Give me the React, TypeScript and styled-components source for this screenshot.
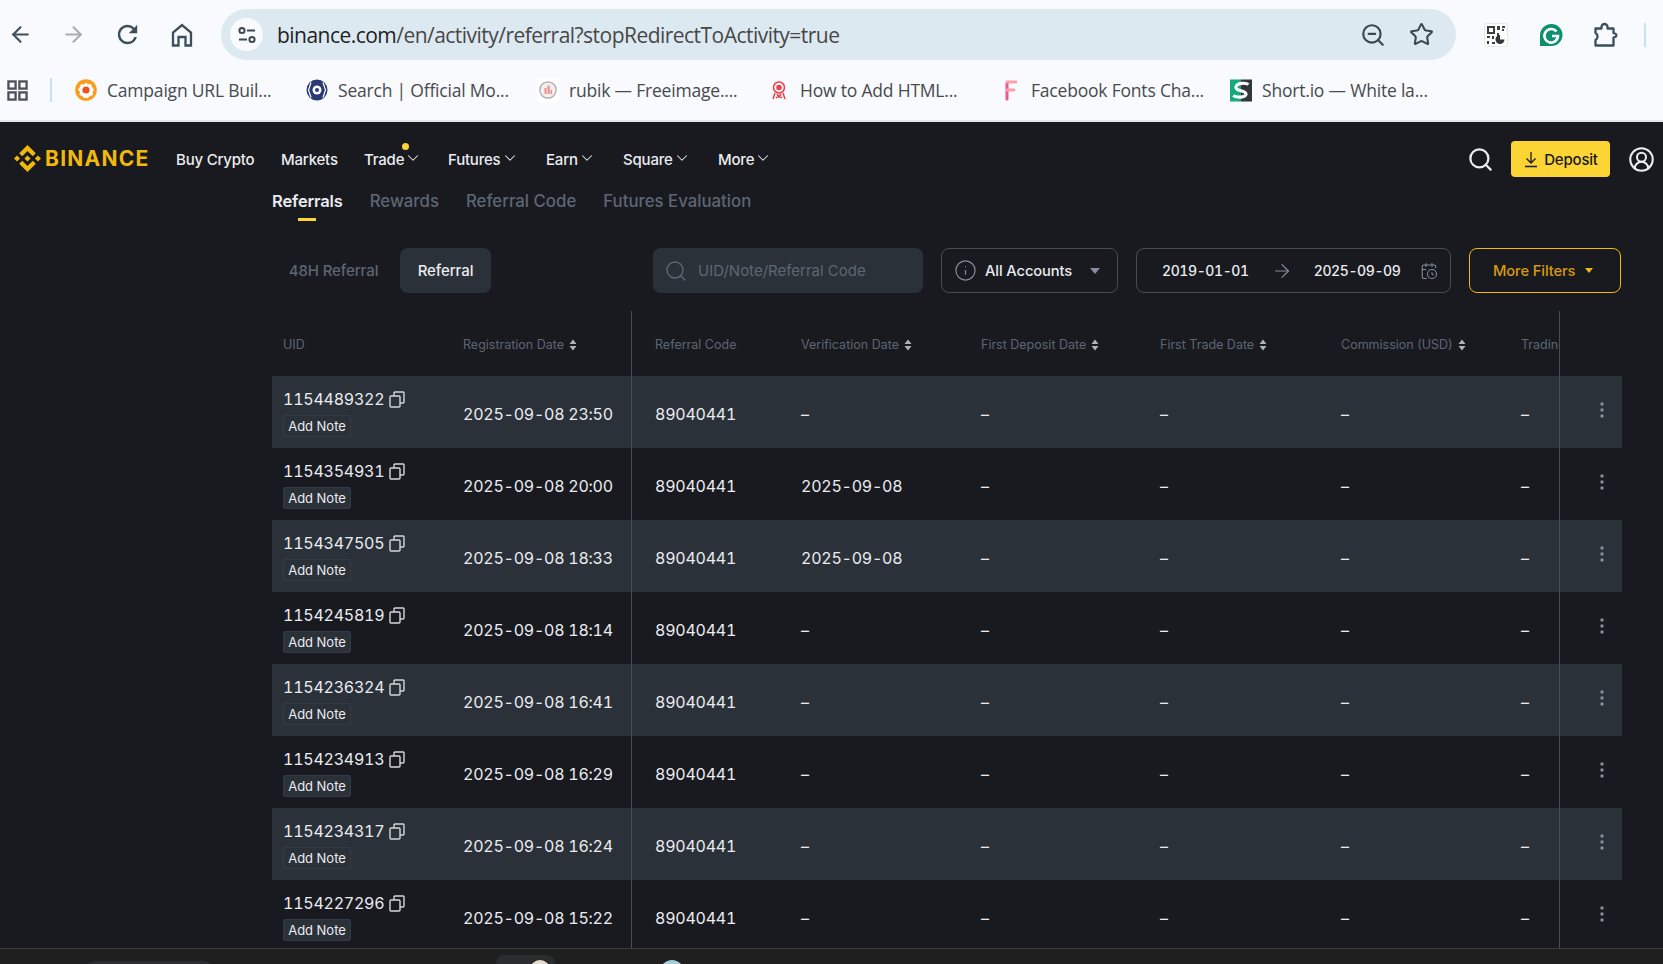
import React from "react";
import styled, { createGlobalStyle } from "styled-components";
import { ArrowLeft, ArrowRight, ZoomOut, Star, Search, ChevronDown, Info, CalendarClock, CircleUserRound } from "lucide-react";

const Global = createGlobalStyle`
  html, body { margin: 0; padding: 0; background: #181a20; overflow: hidden; }
  * { box-sizing: border-box; }
  #root { width: 1663px; height: 964px; overflow: hidden; }
`;

const Page = styled.div`
  width: 1663px; height: 964px; display: flex; flex-direction: column; position: relative;
  background: #181a20; font-family: Inter, "Liberation Sans", sans-serif; overflow: hidden;
`;
const Browser = styled.div`
  flex: 0 0 122px; height: 122px; background: #f8fafd; border-bottom: 2px solid #e3e5e8; display: flex; flex-direction: column;
  font-family: "Open Sans", "Liberation Sans", sans-serif;
`;
const Toolbar = styled.div`
  height: 65px; flex: none; padding: 9px 0 0 0; display: flex; align-items: flex-start;
`;
const NavIcon = styled.span<{ $w: number; $c?: string }>`
  flex: 0 0 ${p => p.$w}px; height: 51px; display: flex; align-items: center; justify-content: center; color: ${p => p.$c || "#3c4f5a"};
`;
const Omnibox = styled.div`
  margin-left: 6px; width: 1235px; height: 51px; border-radius: 26px; background: #dde9f1; display: flex; align-items: center; padding: 0 11px 0 9px;
`;
const Tune = styled.span`
  width: 33px; height: 33px; border-radius: 50%; background: #f8fafd; display: flex; align-items: center; justify-content: center; margin-right: 14px; flex: none;
`;
const Url = styled.div`
  flex: 1; font-size: 21px; letter-spacing: -0.53px; color: #474747; white-space: nowrap;
  b { font-weight: 400; color: #1f1f1f; }
`;
const OmniIcon = styled.span`
  width: 48px; display: flex; justify-content: center; color: #3c474f;
`;
const ToolDivider = styled.span`
  width: 2px; height: 24px; margin-top: 14px; background: #c2e3f5; flex: none;
`;
const Bookmarks = styled.div`
  height: 50px; flex: none; display: flex; align-items: center; padding-left: 7px;
`;
const Divider = styled.span`
  width: 2px; height: 24px; background: #c2e3f5; margin: 0 23px 0 22px; flex: none;
`;
const Bookmark = styled.div<{ $w: number }>`
  flex: 0 0 ${p => p.$w}px; display: flex; align-items: center; gap: 10px; font-size: 17.5px; letter-spacing: -0.2px; color: #474a4e; white-space: nowrap;
`;
const Fav = styled.span`
  width: 22px; height: 24px; flex: none; display: flex; align-items: center; justify-content: center;
`;

const Nav = styled.div`
  height: 50px; flex: none; margin-top: 12px; display: flex; align-items: center; padding-left: 14px; color: #eaecef; font-size: 15px; font-weight: 500;
`;
const Logo = styled.div`
  display: flex; align-items: center; gap: 4px; color: #f0b90b; font-size: 21px; font-weight: 700; letter-spacing: 1.25px; width: 162px; flex: none; margin-top: -2px;
`;
const NavItem = styled.div<{ $w: number }>`
  flex: 0 0 ${p => p.$w}px; position: relative; display: flex; align-items: center; gap: 0; letter-spacing: -0.2px; white-space: nowrap;
  svg { margin-top: -3px; }
`;
const Dot = styled.span`
  position: absolute; width: 7px; height: 7px; border-radius: 50%; background: #fcd535; left: 38px; top: -7px;
`;
const NavRight = styled.div`
  margin-left: auto; padding-right: 8px; display: flex; align-items: center; color: #eaecef;
`;
const DepositBtn = styled.div`
  width: 99px; height: 36px; margin: 0 18px 0 17px; background: #fcd535; border-radius: 4px; color: #181a20; display: flex; align-items: center; justify-content: center; gap: 5px; font-size: 15px; letter-spacing: -0.2px;
`;
const Content = styled.div`
  flex: 1; min-height: 0; padding-left: 272px; padding-right: 41px; display: flex; flex-direction: column;
`;
const Tabs = styled.div`
  height: 36px; flex: none; display: flex; gap: 27px; margin-top: 5px;
`;
const Tab = styled.div<{ $active?: boolean }>`
  position: relative; font-size: ${p => (p.$active ? 16.5 : 16.8)}px; line-height: 24px; letter-spacing: ${p => (p.$active ? "-0.15px" : "0")}; font-weight: ${p => (p.$active ? 600 : 500)}; color: ${p => (p.$active ? "#eaecef" : "#5e6673")};
  ${p => p.$active && `&::after { content: ""; position: absolute; left: 26px; bottom: 4px; width: 18px; height: 3px; background: #fcd535; }`}
`;
const Filters = styled.div`
  display: flex; align-items: stretch; height: 45px; margin-top: 23px; flex: none;
`;
const Pill = styled.div<{ $active?: boolean }>`
  height: 45px; display: flex; align-items: center; justify-content: center; border-radius: 8px; width: ${p => (p.$active ? 91 : 123)}px; margin-left: ${p => (p.$active ? 5 : 0)}px;
  background: ${p => (p.$active ? "#2b3139" : "transparent")}; color: ${p => (p.$active ? "#eaecef" : "#5e6673")}; font-size: 15px; font-weight: 500; letter-spacing: -0.1px;
`;
const SearchBox = styled.div`
  margin-left: 162px; width: 270px; background: #2b3139; border-radius: 8px; display: flex; align-items: center; gap: 10px; padding-left: 11px; color: #5e6673; font-size: 15px;
`;
const Outline = styled.div<{ $w: number; $gold?: boolean; $gap: number; $pad: number }>`
  width: ${p => p.$w}px; margin-left: ${p => p.$gap}px; padding-left: ${p => p.$pad}px; border: 1px solid ${p => (p.$gold ? "#f0b90b" : "#474d57")}; border-radius: 8px; display: flex; align-items: center;
  color: ${p => (p.$gold ? "#d89a0c" : "#eaecef")}; font-size: 14.7px; font-weight: 500; letter-spacing: -0.1px; white-space: nowrap;
`;
const AccountLabel = styled.span`
  margin: 0 18px 0 8px;
`;
const Caret = styled.span<{ $c: string; $s: number; $ml?: number }>`
  width: 0; height: 0; margin-left: ${p => p.$ml || 0}px; border-left: ${p => p.$s}px solid transparent; border-right: ${p => p.$s}px solid transparent; border-top: ${p => p.$s + 1}px solid ${p => p.$c}; flex: none;
`;
const DateVal = styled.span`
  color: #eaecef; font-variant-numeric: tabular-nums; font-size: 14px; letter-spacing: -0.4px; flex: 0 0 85px;
`;
const DateArrow = styled(ArrowRight)`
  margin: 0 21px 0 22px; flex: none;
`;
const CalIcon = styled(CalendarClock)`
  margin-left: 20px; flex: none;
`;

const Table = styled.div`
  margin-top: 18px; flex: 1; min-height: 0; display: flex; flex-direction: column;
`;
const Row = styled.div<{ $striped?: boolean; $head?: boolean }>`
  flex: 0 0 ${p => (p.$head ? 65 : 72)}px; height: ${p => (p.$head ? 65 : 72)}px; display: flex; background: ${p => (p.$striped ? "#2b3139" : "transparent")};
  color: ${p => (p.$head ? "#5e6673" : "#eaecef")}; font-size: ${p => (p.$head ? "12.5px" : "16px")};
  font-variant-numeric: ${p => (p.$head ? "normal" : "tabular-nums")}; letter-spacing: ${p => (p.$head ? "0" : "-0.25px")};
`;
const Frozen = styled.div`
  flex: 0 0 360px; display: flex; border-right: 1px solid #474d57;
`;
const Middle = styled.div`
  flex: 0 0 927px; width: 927px; overflow: hidden; display: flex; padding-left: 23px;
`;
const Actions = styled.div`
  flex: 0 0 63px; border-left: 1px solid #474d57; display: flex; justify-content: flex-end; align-items: center; padding: 0 18px 5px 0; color: #848e9c;
`;
const Cell = styled.div<{ $w: number; $head?: boolean }>`
  flex: 0 0 ${p => p.$w}px; width: ${p => p.$w}px; display: flex; align-items: center; white-space: nowrap; padding-top: ${p => (p.$head ? 2 : 4)}px; gap: 5px;
`;
const UidCell = styled.div`
  flex: 0 0 191px; padding-left: 11px; display: flex; flex-direction: column; align-items: flex-start; padding-top: 13px;
`;
const UidLine = styled.div`
  display: flex; align-items: center; gap: 5px; height: 20px; line-height: 20px;
`;
const Note = styled.div`
  margin-top: 6px; width: 68px; height: 22px; border-radius: 2px; display: flex; align-items: center; justify-content: center; font-size: 13px; letter-spacing: 0; color: #eaecef;
  background: #2b3139; border: 1px solid #333b47;
`;
const HeadUid = styled.div`
  flex: 0 0 191px; padding-left: 11px; display: flex; align-items: center; padding-top: 2px;
`;
const Bottom = styled.div`
  position: absolute; left: 0; right: 0; top: 948px; height: 16px; background: #1f1f1f; border-top: 1px solid #3c3c3c; overflow: hidden;
`;
const Tile = styled.div<{ $l: number; $w: number; $t: number; $r: number; $c: string }>`
  position: absolute; left: ${p => p.$l}px; width: ${p => p.$w}px; top: ${p => p.$t}px; height: 30px; border-radius: ${p => p.$r}px; background: ${p => p.$c};
`;

const Sort = () => (
  <svg width="8" height="12" viewBox="0 0 8 12" fill="#aeb4bc"><path d="M4 .5 7.5 5h-7zM4 11.5.5 7h7z" /></svg>
);
const Copy = () => (
  <svg width="16" height="17" viewBox="0 0 16 17" fill="none" stroke="#d5d8dc" strokeWidth="1.4">
    <rect x="1" y="5" width="10" height="11" rx="1" /><path d="M5 5V2a1 1 0 0 1 1-1h8a1 1 0 0 1 1 1v9a1 1 0 0 1-1 1h-3" />
  </svg>
);
const Kebab = () => (
  <svg width="4" height="16" viewBox="0 0 4 16" fill="#848e9c"><circle cx="2" cy="2" r="1.7" /><circle cx="2" cy="8" r="1.7" /><circle cx="2" cy="14" r="1.7" /></svg>
);
const Mark = () => (
  <svg width="27" height="27" viewBox="0 0 126.61 126.61" fill="#f0b90b">
    <path d="m38.73 53.2 24.59-24.58 24.6 24.6 14.3-14.31L63.32 0 24.42 38.9zM0 63.31 14.3 49l14.31 14.31-14.31 14.3zM38.73 73.41 63.32 98l24.6-24.6 14.31 14.29-38.91 38.92-38.91-38.88v-.03zM98 63.31 112.3 49l14.31 14.3-14.31 14.32z" />
    <path d="m77.83 63.3-14.51-14.52-10.73 10.73-1.24 1.23-2.54 2.54 14.51 14.5z" />
  </svg>
);
const TuneIcon = () => (
  <svg width="20" height="20" viewBox="0 0 20 20" fill="none" stroke="#3c474f" strokeWidth="2">
    <circle cx="5" cy="5.500" r="2.600" /><path d="M10 5.500h8M2 14.500h8" /><circle cx="15" cy="14.500" r="2.600" />
  </svg>
);
const ReloadIcon = () => (
  <svg width="29" height="29" viewBox="0 0 24 24" fill="currentColor">
    <path d="M17.65 6.35A7.95 7.95 0 0 0 12 4c-4.42 0-7.99 3.58-7.99 8s3.57 8 7.99 8c3.73 0 6.84-2.55 7.73-6h-2.08A5.99 5.99 0 0 1 12 18c-3.31 0-6-2.69-6-6s2.69-6 6-6c1.66 0 3.14.69 4.22 1.78L13 11h7V4l-2.35 2.35z" />
  </svg>
);
const HomeIcon = () => (
  <svg width="24" height="24" viewBox="0 0 24 24" fill="none" stroke="currentColor" strokeWidth="2.300" strokeLinejoin="miter">
    <path d="M3 22.500V9.500L12 2l9 7.500v13h-5.500V14h-7v8.500z" />
  </svg>
);
const DepositIcon = () => (
  <svg width="16" height="17" viewBox="0 0 16 17" fill="none" stroke="#181a20" strokeWidth="1.300">
    <path d="M8 1v11M3.500 7.500 8 12l4.500-4.500M2 15.500h12" />
  </svg>
);
const AppsIcon = () => (
  <svg width="21" height="21" viewBox="0 0 22 22" fill="none" stroke="#4b5157" strokeWidth="2.400">
    <rect x="1.500" y="1.500" width="7.500" height="7.500" /><rect x="13" y="1.500" width="7.500" height="7.500" /><rect x="1.500" y="13" width="7.500" height="7.500" /><rect x="13" y="13" width="7.500" height="7.500" />
  </svg>
);
const GearFav = () => (
  <svg width="22" height="22" viewBox="0 0 22 22">
    <circle cx="11" cy="11" r="10.800" fill="#f99d1c" />
    <path d="M11 3.500 13 5.500 16 5l1 3 2 2.500-1.500 2.500.5 3-3 1L13 19h-4l-1.500-2-3-1 .5-3L3 10.500 5 8l1-3 3 .5z" fill="#fff" />
    <circle cx="11" cy="11" r="3.600" fill="#f0501e" />
  </svg>
);
const SearchFav = () => (
  <svg width="22" height="22" viewBox="0 0 22 22">
    <circle cx="11" cy="11" r="10.500" fill="#2b3a75" />
    <path d="M5 3.500 2.500 11 5 18.500M17 3.500 19.500 11 17 18.500" fill="none" stroke="#fff" strokeWidth="1.200" />
    <circle cx="11" cy="11" r="4.500" fill="#fff" /><circle cx="11" cy="11" r="2" fill="#2b3a75" />
  </svg>
);
const RubikFav = () => (
  <svg width="22" height="24" viewBox="0 0 22 24">
    <rect width="22" height="24" rx="3" fill="#fff" />
    <circle cx="11" cy="12" r="8.200" fill="#f6eeee" stroke="#a9a9a9" strokeWidth="1.200" />
    <path d="M7.500 16v-6h2v6zM10.500 16V7.500h2.200V16zM13.500 16v-4h1.600v4z" fill="#e8908f" />
  </svg>
);
const HtmlFav = () => (
  <svg width="18" height="20" viewBox="0 0 18 20" fill="none" stroke="#ef3e46" strokeWidth="1.500">
    <circle cx="9" cy="7.500" r="5.500" /><circle cx="9" cy="7.500" r="2" fill="#ef3e46" />
    <path d="M5 13 3 19M13 13l2 6M7 14l2 3 2-3M6 18l3-2 3 2" />
  </svg>
);
const FFav = () => (
  <svg width="14" height="22" viewBox="0 0 14 22" fill="none" strokeWidth="3" strokeLinecap="round">
    <path d="M4 20V4" stroke="#f0568f" /><path d="M4 3h9" stroke="#f9a3a8" /><path d="M4 11h7" stroke="#f9a3a8" />
  </svg>
);
const ShortFav = () => (
  <svg width="22" height="25" viewBox="0 0 24 24">
    <rect width="12" height="24" fill="#16a97c" /><rect x="12" width="12" height="24" fill="#33373a" />
    <path d="M20 5.500C18 3.500 7 3 6.500 8.500 6 13 18 11.500 17.500 16c-.4 4-10.500 4-14 1.500" fill="none" stroke="#fff" strokeWidth="3.400" />
  </svg>
);
const QrIcon = () => (
  <svg width="24" height="24" viewBox="0 0 24 24">
    <rect x=".5" y=".5" width="23" height="23" rx="2" fill="#fff" stroke="#e4e6e8" />
    <path d="M3 3h8v8H3zM5 5v4h4V5zM13 3h3v4h-3zM18 3h3v2h-3zM18 6h2v2h-2zM3 13h3v2H3zM8 13h2v3H8zM3 18h2v3H3zM8 19h3v2H8zM13 10h2v3h-2z" fill="#3a3f44" fillRule="evenodd" />
    <path d="M16 21a4.500 4.500 0 0 1 0-9v4.500h4.500A4.500 4.500 0 0 1 16 21z" fill="#33373b" />
  </svg>
);
const GrammarlyIcon = () => (
  <svg width="24" height="24" viewBox="0 0 24 24">
    <path d="M12.500 1a11 11 0 1 1 0 22H1V12.500A11.500 11.500 0 0 1 12.500 1z" fill="#0e8f70" />
    <path d="M17.500 8.500A6.800 6.800 0 1 0 19 13h-6" fill="none" stroke="#fff" strokeWidth="2.600" />
  </svg>
);
const PuzzleIcon = () => (
  <svg width="26" height="26" viewBox="0 0 26 26" fill="none" stroke="currentColor" strokeWidth="2.300" strokeLinejoin="round">
    <path d="M3.500 6.500h6V5a3 3 0 0 1 6 0v1.500h6V11l1.500.5a1.800 1.800 0 0 1 0 3.500l-1.500.5v8h-18v-5.500a4 4 0 0 0 0-7z" />
  </svg>
);

const rows = [
  ["1154489322", "2025-09-08 23:50", "–"],
  ["1154354931", "2025-09-08 20:00", "2025-09-08"],
  ["1154347505", "2025-09-08 18:33", "2025-09-08"],
  ["1154245819", "2025-09-08 18:14", "–"],
  ["1154236324", "2025-09-08 16:41", "–"],
  ["1154234913", "2025-09-08 16:29", "–"],
  ["1154234317", "2025-09-08 16:24", "–"],
  ["1154227296", "2025-09-08 15:22", "–"],
];

const marks = [
  { label: "Campaign URL Buil...", w: 231, fav: <GearFav /> },
  { label: "Search | Official Mo...", w: 231, fav: <SearchFav /> },
  { label: "rubik — Freeimage....", w: 231, fav: <RubikFav /> },
  { label: "How to Add HTML...", w: 231, fav: <HtmlFav /> },
  { label: "Facebook Fonts Cha...", w: 231, fav: <FFav /> },
  { label: "Short.io — White la...", w: 240, fav: <ShortFav /> },
];
const navItems: [string, number, boolean, boolean?][] = [
  ["Buy Crypto", 105, false],
  ["Markets", 83, false],
  ["Trade", 84, true, true],
  ["Futures", 98, true],
  ["Earn", 77, true],
  ["Square", 95, true],
  ["More", 60, true],
];

export default function App() {
  return (
    <Page>
      <Global />
      <Browser>
        <Toolbar>
          <NavIcon $w={41}><ArrowLeft size={25} strokeWidth={2} /></NavIcon>
          <NavIcon $w={64} $c="#a9adb1"><ArrowRight size={25} strokeWidth={2} /></NavIcon>
          <NavIcon $w={44}><ReloadIcon /></NavIcon>
          <NavIcon $w={66}><HomeIcon /></NavIcon>
          <Omnibox>
            <Tune><TuneIcon /></Tune>
            <Url><b>binance.com</b>/en/activity/referral?stopRedirectToActivity=true</Url>
            <OmniIcon><ZoomOut size={26} strokeWidth={2} /></OmniIcon>
            <OmniIcon><Star size={25} strokeWidth={2} /></OmniIcon>
          </Omnibox>
          <NavIcon $w={80}><QrIcon /></NavIcon>
          <NavIcon $w={30}><GrammarlyIcon /></NavIcon>
          <NavIcon $w={78}><PuzzleIcon /></NavIcon>
          <ToolDivider />
        </Toolbar>
        <Bookmarks>
          <AppsIcon />
          <Divider />
          {marks.map(m => (
            <Bookmark key={m.label} $w={m.w}><Fav>{m.fav}</Fav>{m.label}</Bookmark>
          ))}
        </Bookmarks>
      </Browser>
      <Nav>
        <Logo><Mark />BINANCE</Logo>
        {navItems.map(([label, w, chev, dot]) => (
          <NavItem key={label} $w={w}>
            {label}
            {dot && <Dot />}
            {chev && <ChevronDown size={18} strokeWidth={1.4} />}
          </NavItem>
        ))}
        <NavRight>
          <Search size={27} strokeWidth={2} />
          <DepositBtn><DepositIcon />Deposit</DepositBtn>
          <CircleUserRound size={27} strokeWidth={1.8} />
        </NavRight>
      </Nav>
      <Content>
        <Tabs>
          <Tab $active>Referrals</Tab>
          <Tab>Rewards</Tab>
          <Tab>Referral Code</Tab>
          <Tab>Futures Evaluation</Tab>
        </Tabs>
        <Filters>
          <Pill>48H Referral</Pill>
          <Pill $active>Referral</Pill>
          <SearchBox><Search size={24} strokeWidth={1.4} />UID/Note/Referral Code</SearchBox>
          <Outline $w={177} $gap={18} $pad={12}>
            <Info size={23} strokeWidth={1.2} color="#848e9c" />
            <AccountLabel>All Accounts</AccountLabel>
            <Caret $c="#848e9c" $s={5} />
          </Outline>
          <Outline $w={315} $gap={18} $pad={25}>
            <DateVal>2019-01-01</DateVal>
            <DateArrow size={22} strokeWidth={1.3} color="#848e9c" />
            <DateVal>2025-09-09</DateVal>
            <CalIcon size={18} strokeWidth={1.4} color="#848e9c" />
          </Outline>
          <Outline $w={152} $gap={18} $pad={23} $gold>
            More Filters
            <Caret $c="#f0b90b" $s={4} $ml={10} />
          </Outline>
        </Filters>
        <Table>
          <Row $head>
            <Frozen>
              <HeadUid>UID</HeadUid>
              <Cell $w={168} $head>Registration Date <Sort /></Cell>
            </Frozen>
            <Middle>
              <Cell $w={146} $head>Referral Code</Cell>
              <Cell $w={180} $head>Verification Date <Sort /></Cell>
              <Cell $w={179} $head>First Deposit Date <Sort /></Cell>
              <Cell $w={181} $head>First Trade Date <Sort /></Cell>
              <Cell $w={180} $head>Commission (USD) <Sort /></Cell>
              <Cell $w={120} $head>Trading Volume</Cell>
            </Middle>
            <Actions />
          </Row>
          {rows.map(([uid, date, verify], i) => (
            <Row key={uid} $striped={i % 2 === 0}>
              <Frozen>
                <UidCell>
                  <UidLine>{uid}<Copy /></UidLine>
                  <Note>Add Note</Note>
                </UidCell>
                <Cell $w={168}>{date}</Cell>
              </Frozen>
              <Middle>
                <Cell $w={146}>89040441</Cell>
                <Cell $w={180}>{verify}</Cell>
                <Cell $w={179}>–</Cell>
                <Cell $w={181}>–</Cell>
                <Cell $w={180}>–</Cell>
                <Cell $w={120}>–</Cell>
              </Middle>
              <Actions><Kebab /></Actions>
            </Row>
          ))}
        </Table>
      </Content>
      <Bottom>
        <Tile $l={84} $w={131} $t={12} $r={12} $c="#2b2c2e" />
        <Tile $l={496} $w={59} $t={6} $r={8} $c="#2b2c2e" />
        <Tile $l={530} $w={20} $t={11} $r={10} $c="#e6dcd0" />
        <Tile $l={660} $w={24} $t={11} $r={12} $c="#a8cdd6" />
      </Bottom>
    </Page>
  );
}
